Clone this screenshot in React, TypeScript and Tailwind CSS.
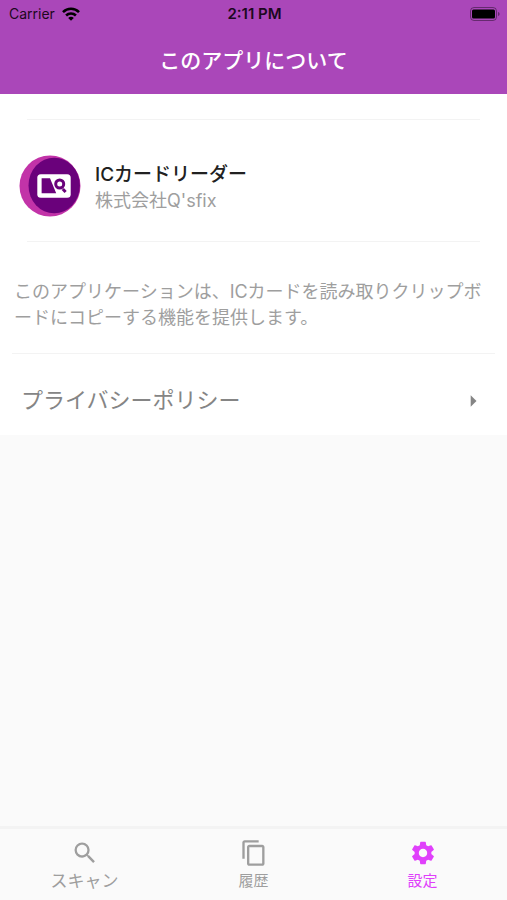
import { MdArrowRight, MdContentCopy, MdSearch, MdSettings } from "react-icons/md";

const tabs = [
  { label: "スキャン", icon: MdSearch, textClass: "text-[17px]", active: false },
  { label: "履歴", icon: MdContentCopy, textClass: "text-[15px]", active: false },
  { label: "設定", icon: MdSettings, textClass: "text-[15px]", active: true }
];

const WifiIcon = () => (
  <svg viewBox="0 0 18 14" className="h-3.5 w-[18px]" fill="none" stroke="#000" strokeWidth="2.6">
    <path d="M1 5.1a11.4 11.4 0 0 1 16 0" />
    <path d="M4.1 8.5a7 7 0 0 1 9.8 0" />
    <path d="M9 13.8 6.2 11a3.9 3.9 0 0 1 5.6 0z" fill="#000" stroke="none" />
  </svg>
);

const BatteryIcon = () => (
  <svg viewBox="0 0 30 14" className="h-3.5 w-[30px]">
    <rect x="0.5" y="0.5" width="26" height="13" rx="3.5" fill="none" stroke="#000" strokeOpacity="0.4" />
    <rect x="2" y="2.5" width="23" height="9" rx="1.5" fill="#000" />
    <path d="M28 5v4c1-.3 1.6-1.1 1.6-2S29 5.3 28 5z" fill="#000" fillOpacity="0.4" />
  </svg>
);

const AppLogo = () => (
  <svg viewBox="0 0 62 62" className="size-[62px] shrink-0" role="img" aria-label="ICカードリーダー">
    <circle cx="31" cy="31" r="30.5" fill="#c233a8" />
    <ellipse cx="35.2" cy="30.5" rx="25.7" ry="27.8" fill="#6a017b" />
    <rect x="18.3" y="19.3" width="33.4" height="23.4" rx="3.5" fill="#fff" />
    <path d="M22.6 23.2h8.4l6.2 15H22.6z" fill="#6a017b" />
    <circle cx="40.7" cy="29" r="4" fill="#fff" stroke="#6a017b" strokeWidth="3" />
    <path d="m43.8 34 2.800 3" stroke="#6a017b" strokeWidth="3" />
  </svg>
);

export default function App() {
  return (
    <div className="flex min-h-screen flex-col bg-[#fafafa] font-['Inter','Noto_Sans_CJK_JP',sans-serif] text-[#9e9e9e]">
      <header className="bg-[#aa47b9]">
        <div className="grid h-7 grid-cols-3 items-center pr-[7px] pl-[9px] text-sm text-[#1c0820]">
          <div className="flex items-center gap-[7px]">
            <span>Carrier</span>
            <WifiIcon />
          </div>
          <span className="text-center text-[15px] font-semibold">2:11 PM</span>
          <div className="flex justify-end">
            <BatteryIcon />
          </div>
        </div>
        <h1 className="flex h-[66px] items-center justify-center text-[21px] font-medium text-white">
          このアプリについて
        </h1>
      </header>

      <main className="flex-1">
        <div className="bg-white pt-[25px]">
          <section className="mx-[27px] border-y border-[#f3f3f3] pt-[35px] pb-6">
            <div className="-ml-2 flex items-center gap-3.5">
              <AppLogo />
              <div className="pt-1 text-[18px] leading-[26px]">
                <h2 className="text-[19px] font-medium text-[#212121]">ICカードリーダー</h2>
                <p>株式会社Q'sfix</p>
              </div>
            </div>
          </section>
          <p className="px-3.5 pt-[37px] pb-[22px] text-[18px] leading-[26px] break-all">
            このアプリケーションは、ICカードを読み取りクリップボードにコピーする機能を提供します。
          </p>
          <a
            href="#privacy"
            className="mx-3 flex h-[82px] items-center justify-between border-t border-[#f3f3f3] pt-3 pr-2 pl-[9px] text-[22px] text-[#858585]"
          >
            プライバシーポリシー
            <MdArrowRight className="size-7" />
          </a>
        </div>
      </main>

      <nav className="grid grid-cols-3 border-t-3 border-[#f3f3f3]">
        {tabs.map(({ label, icon: Icon, textClass, active }) => (
          <button
            key={label}
            type="button"
            aria-current={active ? "page" : undefined}
            className={`flex h-[71px] flex-col items-center gap-0.5 pt-2.5 leading-6 ${textClass} ${
              active ? "text-[#e040fb]" : ""
            }`}
          >
            <Icon className="size-7" />
            {label}
          </button>
        ))}
      </nav>
    </div>
  );
}
